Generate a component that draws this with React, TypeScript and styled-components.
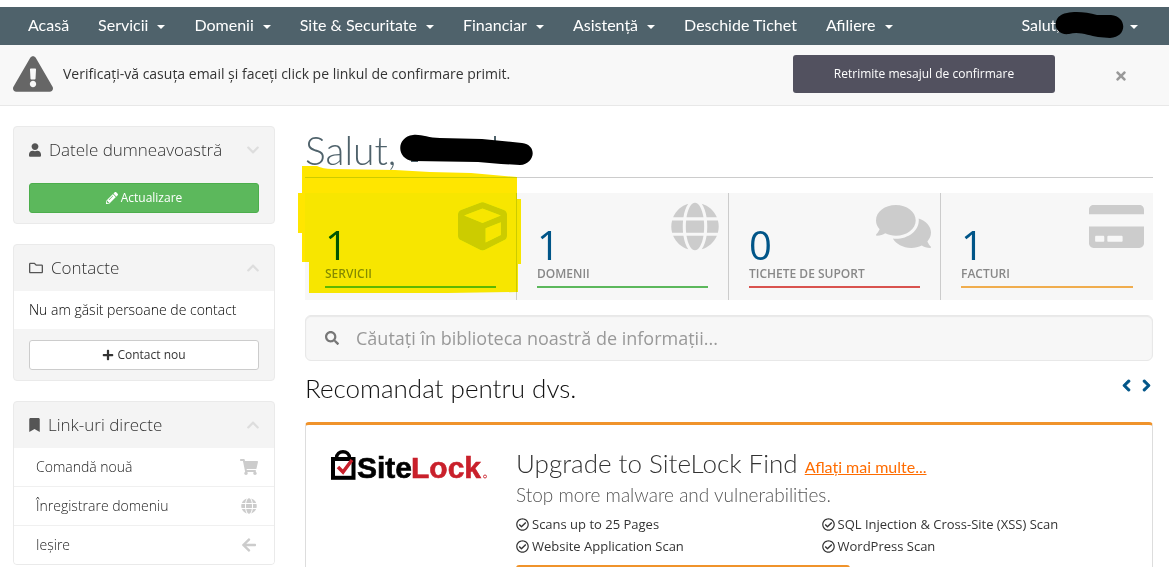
import React from "react";
import styled, { createGlobalStyle } from "styled-components";
import {
  FaArrowLeft,
  FaBookmark,
  FaChevronDown,
  FaChevronLeft,
  FaChevronRight,
  FaChevronUp,
  FaComments,
  FaCreditCard,
  FaCube,
  FaExclamationTriangle,
  FaGlobe,
  FaPencilAlt,
  FaPlus,
  FaRegCheckCircle,
  FaRegFolder,
  FaSearch,
  FaShoppingCart,
  FaTimes,
  FaUser,
} from "react-icons/fa";

const bodyFont = `"Open Sans", "Noto Sans", sans-serif`;
const displayFont = `Lato, "Open Sans", sans-serif`;

const GlobalStyle = createGlobalStyle`
  *, *::before, *::after { box-sizing: border-box; }
  body {
    margin: 0;
    background: #fff;
    color: #333;
    font: 14px/20px ${bodyFont};
  }
  button, input { font: inherit; }
  svg { display: block; flex: none; }
`;

const Page = styled.div`
  height: 100vh;
  overflow: hidden;
  padding-top: 7px;
`;

const NavBar = styled.nav`
  display: flex;
  align-items: center;
  justify-content: space-between;
  height: 38px;
  padding: 0 31px 2px 28px;
  background: #4f626b;
`;

const NavList = styled.ul`
  display: flex;
  gap: 29px;
  margin: 0;
  padding: 0;
  list-style: none;
`;

const NavLink = styled.a`
  display: flex;
  align-items: center;
  color: #fff;
  font: 16px/24px ${displayFont};
  white-space: nowrap;
  text-decoration: none;
`;

const Caret = styled.span`
  width: 8px;
  height: 4px;
  margin: 3px 0 0 9px;
  border: 4px solid transparent;
  border-top-color: #fff;
  border-bottom: 0;
`;

const NavScribble = styled.svg`
  margin: 0 -3px 0 -5px;
`;

const Alert = styled.div`
  display: flex;
  align-items: center;
  height: 61px;
  padding: 0 41px 2px 13px;
  background: #f8f8f8;
  border-bottom: 1px solid #e8e8e8;
`;

const AlertIcon = styled(FaExclamationTriangle)`
  width: 40px;
  height: 36px;
  color: #666;
`;

const AlertText = styled.p`
  flex: 1;
  margin: 0 10px;
`;

const AlertButton = styled.button`
  width: 262px;
  height: 38px;
  margin-right: 59px;
  color: #fff;
  font-size: 12px;
  background: #52515f;
  border: 0;
  border-radius: 3px;
`;

const CloseButton = styled.button`
  margin-top: 4px;
  padding: 0;
  color: #999;
  font-size: 14px;
  background: none;
  border: 0;
`;

const Columns = styled.div`
  display: grid;
  grid-template-columns: 262px minmax(0, 1fr);
  gap: 30px;
  padding: 20px 16px 0 13px;
`;

const Sidebar = styled.aside`
  display: flex;
  flex-direction: column;
  gap: 20px;
`;

const Panel = styled.section`
  background: #f4f4f4;
  border: 1px solid #eaeaea;
  border-radius: 4px;
  overflow: hidden;
`;

const PanelHeader = styled.header`
  display: flex;
  align-items: center;
  height: 46px;
  padding: 0 14px 0 15px;
  color: #555;
`;

const PanelIcon = styled.span<{ $width: number }>`
  svg {
    width: ${(p) => p.$width}px;
    height: 14px;
  }
`;

const PanelTitle = styled.h3`
  flex: 1;
  margin: 0 0 0 8px;
  color: #333;
  font-size: 17px;
  font-weight: 300;
`;

const Toggle = styled.button`
  padding: 0;
  color: #ddd;
  font-size: 14px;
  background: none;
  border: 0;
`;

const PanelBody = styled.div`
  padding: 9px 15px;
  color: #000;
  font-weight: 300;
  background: #fff;
  border-bottom: 1px solid #f4f4f4;
`;

const PanelFooter = styled.footer`
  padding: 10px 15px;
`;

const BlockButton = styled.button<{ $success?: boolean }>`
  display: flex;
  align-items: center;
  justify-content: center;
  gap: 3px;
  width: 100%;
  height: 30px;
  color: ${(p) => (p.$success ? "#fff" : "#333")};
  font-size: 12px;
  background: ${(p) => (p.$success ? "#5cb85c" : "#fff")};
  border: 1px solid ${(p) => (p.$success ? "#4cae4c" : "#ccc")};
  border-radius: 3px;
`;

const ShortcutLink = styled.a`
  display: flex;
  align-items: center;
  justify-content: space-between;
  height: 39px;
  padding: 0 15px 0 22px;
  color: #222;
  font-weight: 300;
  text-decoration: none;
  background: #fff;
  border-bottom: 1px solid #f0f0f0;

  &:last-child {
    height: 38px;
    border-bottom: 0;
  }

  svg {
    width: 20px;
    height: 16px;
    color: #ccc;
  }
`;

const Main = styled.main`
  min-width: 0;
`;

const Greeting = styled.h1`
  display: flex;
  align-items: center;
  gap: 2px;
  height: 52px;
  margin: 0 0 15px;
  padding-bottom: 3px;
  color: #4f626b;
  font: 300 39px/48px ${displayFont};
  border-bottom: 1px solid #ccc;
`;

const Tiles = styled.div`
  display: grid;
  grid-template-columns: repeat(4, 1fr);
  margin-bottom: 15px;
`;

const Tile = styled.a`
  position: relative;
  height: 107px;
  padding: 32px 20px 0;
  color: #058;
  text-decoration: none;
  background: #f7f7f7;
  border-right: 1px solid #ccc;

  &:last-child {
    border-right: 0;
  }
`;

const TileIcon = styled.span<{ $width: number }>`
  position: absolute;
  top: 9px;
  right: 9px;
  color: #ccc;

  svg {
    width: ${(p) => p.$width}px;
    height: 49px;
  }
`;

const TileCount = styled.div`
  font-size: 40px;
  font-weight: 400;
  line-height: 40px;
`;

const TileLabel = styled.div`
  color: #888;
  font-size: 12px;
  font-weight: 600;
  line-height: 18px;
  white-space: nowrap;
`;

const TileBar = styled.div<{ $color: string }>`
  height: 2px;
  margin-top: 3px;
  background: ${(p) => p.$color};
`;

const Highlight = styled.svg`
  position: absolute;
  z-index: 1;
  left: -7px;
  top: -27px;
  mix-blend-mode: darken;
  pointer-events: none;
`;

const SearchBox = styled.label`
  display: flex;
  align-items: center;
  gap: 17px;
  height: 46px;
  padding: 0 19px 1px;
  color: #777;
  background: #f7f7f7;
  border: 1px solid #e8e8e8;
  border-radius: 6px;
  box-shadow: inset 0 1px 1px #e8e8e8;
`;

const SearchInput = styled.input`
  flex: 1;
  min-width: 0;
  padding: 0;
  color: #555;
  font-size: 18px;
  background: none;
  border: 0;
  outline: 0;

  &::placeholder {
    color: #999;
    opacity: 1;
  }
`;

const SectionHead = styled.div`
  display: flex;
  align-items: center;
  justify-content: space-between;
  height: 61px;
  padding-bottom: 8px;
`;

const SectionTitle = styled.h3`
  margin: 0;
  color: #111;
  font: 300 26px/30px ${displayFont};
`;

const Arrows = styled.div`
  display: flex;
  gap: 7px;
  margin-top: -4px;
`;

const ArrowButton = styled.button`
  padding: 0;
  color: #058;
  font-size: 13px;
  background: none;
  border: 0;

  path {
    stroke: currentColor;
    stroke-width: 40px;
  }
`;

const Promo = styled.article`
  display: grid;
  grid-template-columns: 185px 1fr;
  height: 240px;
  padding: 23px 25px;
  border: 1px solid #ddd;
  border-top: 3px solid #f0932b;
  border-radius: 4px;
`;

const PromoTitle = styled.h3`
  margin: 0 0 2px;
  font: 300 26px/30px ${displayFont};
`;

const PromoLink = styled.a`
  color: #ff6c00;
  font-size: 16px;
  font-weight: 400;
  line-height: 16px;
`;

const PromoSubtitle = styled.h4`
  margin: 0 0 3px;
  color: #555;
  font: 300 19px/30px ${displayFont};
`;

const Features = styled.ul`
  display: grid;
  grid-template-columns: 1fr 1fr;
  margin: 0 0 8px;
  padding: 0;
  font-size: 13px;
  line-height: 22px;
  list-style: none;

  li {
    display: flex;
    align-items: center;
    gap: 3px;
  }
`;

const PromoButton = styled.button`
  display: block;
  width: 334px;
  height: 40px;
  color: #fff;
  background: #f0932b;
  border: 0;
  border-radius: 3px;
`;

const navItems = [
  { label: "Acasă" },
  { label: "Servicii", menu: true },
  { label: "Domenii", menu: true },
  { label: "Site & Securitate", menu: true },
  { label: "Financiar", menu: true },
  { label: "Asistență", menu: true },
  { label: "Deschide Tichet" },
  { label: "Afiliere", menu: true },
];

const tiles = [
  { count: 1, label: "SERVICII", color: "#5cb85c", icon: <FaCube />, iconWidth: 49, marked: true },
  { count: 1, label: "DOMENII", color: "#5cb85c", icon: <FaGlobe />, iconWidth: 48 },
  { count: 0, label: "TICHETE DE SUPORT", color: "#d9534f", icon: <FaComments />, iconWidth: 55 },
  { count: 1, label: "FACTURI", color: "#f0ad4e", icon: <FaCreditCard />, iconWidth: 55 },
];

const shortcuts = [
  { label: "Comandă nouă", icon: <FaShoppingCart /> },
  { label: "Înregistrare domeniu", icon: <FaGlobe /> },
  { label: "Ieșire", icon: <FaArrowLeft /> },
];

const features = [
  "Scans up to 25 Pages",
  "SQL Injection & Cross-Site (XSS) Scan",
  "Website Application Scan",
  "WordPress Scan",
];

function SiteLockLogo() {
  return (
    <svg width="160" height="40" viewBox="0 0 160 40" role="img" aria-label="SiteLock">
      <path d="M5.500 10C5.500 1.500 18.500 1.500 18.500 10" fill="none" stroke="#000" strokeWidth="3.500" />
      <rect x="2" y="11" width="20.500" height="18.800" fill="#fff" stroke="#000" strokeWidth="4" />
      <path d="M7 19l5 5 9-12" fill="none" stroke="#c9202b" strokeWidth="3.500" />
      <g fontFamily="Liberation Sans, Arial, sans-serif" fontWeight="700" fontSize="30">
        <text x="26" y="30" fill="#000" stroke="#000" strokeWidth="0.600">Site</text>
        <text x="80" y="30" fill="#c9202b" stroke="#c9202b" strokeWidth="0.600">Lock</text>
      </g>
      <circle cx="154" cy="28.500" r="1.500" fill="none" stroke="#c9202b" strokeWidth="0.900" />
    </svg>
  );
}

export default function App() {
  return (
    <>
      <GlobalStyle />
      <Page>
        <NavBar>
          <NavList>
            {navItems.map((item) => (
              <li key={item.label}>
                <NavLink href="#">
                  {item.label}
                  {item.menu && <Caret />}
                </NavLink>
              </li>
            ))}
          </NavList>
          <NavLink href="#">
            Salut,
            <NavScribble width="69" height="28" viewBox="0 0 69 28">
              <path
                d="M12 2C20 0 32 1 42 4L56 4C72 5 73 26 55 27L43 26C34 25 25 20 14 23C-3 25-4 4 12 2Z"
                fill="#000"
              />
            </NavScribble>
            <Caret />
          </NavLink>
        </NavBar>

        <Alert>
          <AlertIcon />
          <AlertText>
            Verificați-vă casuța email și faceți click pe linkul de confirmare primit.
          </AlertText>
          <AlertButton>Retrimite mesajul de confirmare</AlertButton>
          <CloseButton aria-label="Închide">
            <FaTimes />
          </CloseButton>
        </Alert>

        <Columns>
          <Sidebar>
            <Panel>
              <PanelHeader>
                <PanelIcon $width={12}>
                  <FaUser />
                </PanelIcon>
                <PanelTitle>Datele dumneavoastră</PanelTitle>
                <Toggle aria-label="Extinde">
                  <FaChevronDown />
                </Toggle>
              </PanelHeader>
              <PanelFooter>
                <BlockButton $success>
                  <FaPencilAlt /> Actualizare
                </BlockButton>
              </PanelFooter>
            </Panel>

            <Panel>
              <PanelHeader>
                <PanelIcon $width={14}>
                  <FaRegFolder />
                </PanelIcon>
                <PanelTitle>Contacte</PanelTitle>
                <Toggle aria-label="Restrânge">
                  <FaChevronUp />
                </Toggle>
              </PanelHeader>
              <PanelBody>Nu am găsit persoane de contact</PanelBody>
              <PanelFooter>
                <BlockButton>
                  <FaPlus /> Contact nou
                </BlockButton>
              </PanelFooter>
            </Panel>

            <Panel>
              <PanelHeader>
                <PanelIcon $width={11}>
                  <FaBookmark />
                </PanelIcon>
                <PanelTitle>Link-uri directe</PanelTitle>
                <Toggle aria-label="Restrânge">
                  <FaChevronUp />
                </Toggle>
              </PanelHeader>
              {shortcuts.map((item) => (
                <ShortcutLink key={item.label} href="#">
                  {item.label}
                  {item.icon}
                </ShortcutLink>
              ))}
            </Panel>
          </Sidebar>

          <Main>
            <Greeting>
              Salut,
              <svg width="136" height="34" viewBox="0 0 136 34">
                <path d="M13 28H20M97 3V8" stroke="#4f626b" strokeWidth="2" />
                <path
                  d="M15 2C23 1 30 5 42 5L84 6L124 10C140 12 137 31 122 32L103 31L80 29L15 28C-2 26-2 4 15 2Z"
                  fill="#000"
                />
              </svg>
            </Greeting>

            <Tiles>
              {tiles.map((tile) => (
                <Tile key={tile.label} href="#">
                  <TileIcon $width={tile.iconWidth}>{tile.icon}</TileIcon>
                  <TileCount>{tile.count}</TileCount>
                  <TileLabel>{tile.label}</TileLabel>
                  <TileBar $color={tile.color} />
                  {tile.marked && (
                    <Highlight width="223" height="128" viewBox="0 0 223 128">
                      <path
                        d="M4 0H19C23 2 28 3 34 3L97 4L132 6L173 7L219 11V33H223V98H220V126L150 127H11V96H4V67H0V27H4Z"
                        fill="#ffe600"
                      />
                    </Highlight>
                  )}
                </Tile>
              ))}
            </Tiles>

            <SearchBox>
              <FaSearch />
              <SearchInput
                type="text"
                aria-label="Căutare"
                placeholder="Căutați în biblioteca noastră de informații..."
              />
            </SearchBox>

            <SectionHead>
              <SectionTitle>Recomandat pentru dvs.</SectionTitle>
              <Arrows>
                <ArrowButton aria-label="Înapoi">
                  <FaChevronLeft />
                </ArrowButton>
                <ArrowButton aria-label="Înainte">
                  <FaChevronRight />
                </ArrowButton>
              </Arrows>
            </SectionHead>

            <Promo>
              <SiteLockLogo />
              <div>
                <PromoTitle>
                  Upgrade to SiteLock Find <PromoLink href="#">Aflați mai multe...</PromoLink>
                </PromoTitle>
                <PromoSubtitle>Stop more malware and vulnerabilities.</PromoSubtitle>
                <Features>
                  {features.map((text) => (
                    <li key={text}>
                      <FaRegCheckCircle />
                      {text}
                    </li>
                  ))}
                </Features>
                <PromoButton aria-label="Upgrade" />
              </div>
            </Promo>
          </Main>
        </Columns>
      </Page>
    </>
  );
}
